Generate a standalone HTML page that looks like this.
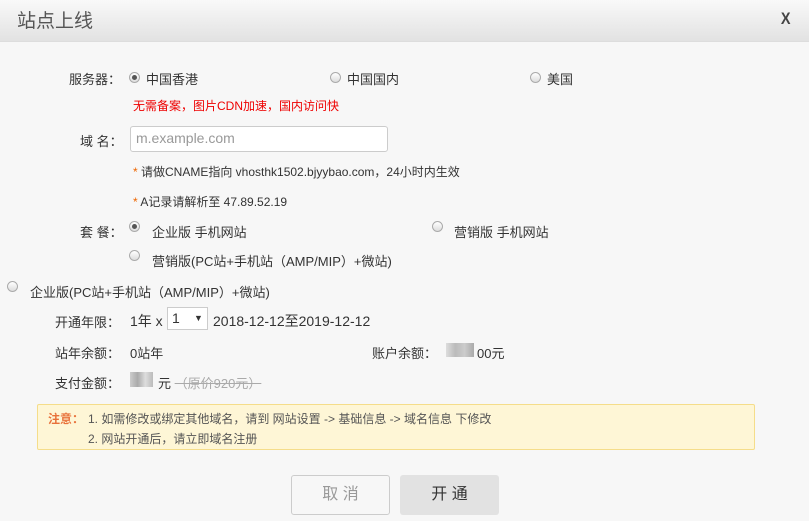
<!DOCTYPE html>
<html><head><meta charset="utf-8"><style>
*{margin:0;padding:0;box-sizing:border-box}
body{width:809px;height:521px;overflow:hidden;background:#f7f7f7;font-family:"Liberation Sans","Noto Sans CJK SC",sans-serif;color:#333;position:relative}
.a{position:absolute;white-space:nowrap}
.hd{position:absolute;left:0;top:0;width:809px;height:42px;background:linear-gradient(#f9f9f9,#e2e2e2);border-bottom:1px solid #ddd}
.r{position:absolute;width:11px;height:11px;border:1px solid #aaa;border-radius:50%;background:linear-gradient(#fff,#ddd)}
.r.on::after{content:"";position:absolute;left:2px;top:2px;width:5px;height:5px;border-radius:50%;background:#555}
.f13{font-size:13px}.f14{font-size:14px}.f12{font-size:12px}
</style></head><body>
<div class="hd"></div>
<div class="a" style="left:17px;top:6px;font-size:19px;color:#555">站点上线</div>
<div class="a" style="left:780px;top:9px;font-size:17px;color:#444;font-weight:bold;transform:scaleX(0.85)">X</div>

<div class="a f13" style="left:69px;top:69px">服务器：</div>
<div class="r on" style="left:129px;top:72px"></div><div class="a f13" style="left:146px;top:69px">中国香港</div>
<div class="r" style="left:330px;top:72px"></div><div class="a f13" style="left:347px;top:69px">中国国内</div>
<div class="r" style="left:530px;top:72px"></div><div class="a f13" style="left:547px;top:69px">美国</div>
<div class="a f12" style="left:133px;top:97px;color:#e00">无需备案，图片CDN加速，国内访问快</div>

<div class="a f13" style="left:80px;top:131px">域 名：</div>
<div class="a" style="left:130px;top:126px;width:258px;height:26px;background:#fff;border:1px solid #ccc;border-radius:3px"></div>
<div class="a f14" style="left:136px;top:130px;color:#999">m.example.com</div>
<div class="a f12" style="left:133px;top:163px;color:#333"><span style="color:#e60">*</span> 请做CNAME指向 vhosthk1502.bjyybao.com，24小时内生效</div>
<div class="a f12" style="left:133px;top:193px;color:#333"><span style="color:#e60">*</span> A记录请解析至 47.89.52.19</div>

<div class="a f13" style="left:80px;top:222px">套 餐：</div>
<div class="r on" style="left:129px;top:221px"></div><div class="a f13" style="left:152px;top:222px">企业版 手机网站</div>
<div class="r" style="left:432px;top:221px"></div><div class="a f13" style="left:454px;top:222px">营销版 手机网站</div>
<div class="r" style="left:129px;top:250px"></div><div class="a f13" style="left:152px;top:251px">营销版(PC站+手机站（AMP/MIP）+微站)</div>
<div class="r" style="left:7px;top:281px"></div><div class="a f13" style="left:30px;top:282px">企业版(PC站+手机站（AMP/MIP）+微站)</div>

<div class="a f13" style="left:55px;top:312px">开通年限：</div>
<div class="a f14" style="left:130px;top:311px">1年 x</div>
<div class="a" style="left:167px;top:307px;width:41px;height:23px;background:#fff;border:1px solid #ccc"></div>
<div class="a f14" style="left:172px;top:310px">1</div>
<div class="a" style="left:194px;top:313px;font-size:9px">▼</div>
<div class="a f14" style="left:213px;top:311px">2018-12-12至2019-12-12</div>

<div class="a f13" style="left:55px;top:343px">站年余额：</div>
<div class="a f13" style="left:130px;top:343px">0站年</div>
<div class="a f13" style="left:372px;top:343px">账户余额：</div>
<div class="a" style="left:446px;top:343px;width:28px;height:14px;background:linear-gradient(90deg,#ddd,#bbb,#ccc,#aaa)"></div>
<div class="a f13" style="left:477px;top:343px">00元</div>

<div class="a f13" style="left:55px;top:373px">支付金额：</div>
<div class="a" style="left:130px;top:372px;width:23px;height:15px;background:linear-gradient(90deg,#ccc,#aaa,#ddd,#bbb)"></div>
<div class="a f13" style="left:158px;top:373px">元 <span style="color:#aaa;text-decoration:line-through">（原价920元）</span></div>

<div class="a" style="left:37px;top:404px;width:718px;height:46px;background:#fef6d6;border:1px solid #f5dd8a;border-radius:2px"></div>
<div class="a f12" style="left:48px;top:410px;color:#e8713a;font-weight:bold">注意：</div>
<div class="a f12" style="left:88px;top:410px;color:#555">1. 如需修改或绑定其他域名，请到 网站设置 -&gt; 基础信息 -&gt; 域名信息 下修改</div>
<div class="a f12" style="left:88px;top:430px;color:#555">2. 网站开通后，请立即域名注册</div>

<div class="a" style="left:291px;top:475px;width:99px;height:40px;border:1px solid #ccc;border-radius:3px;background:#f7f7f7;text-align:center;line-height:38px;font-size:16px;color:#999">取 消</div>
<div class="a" style="left:400px;top:475px;width:99px;height:40px;border-radius:3px;background:#e2e2e2;text-align:center;line-height:40px;font-size:16px;color:#333">开 通</div>
</body></html>
